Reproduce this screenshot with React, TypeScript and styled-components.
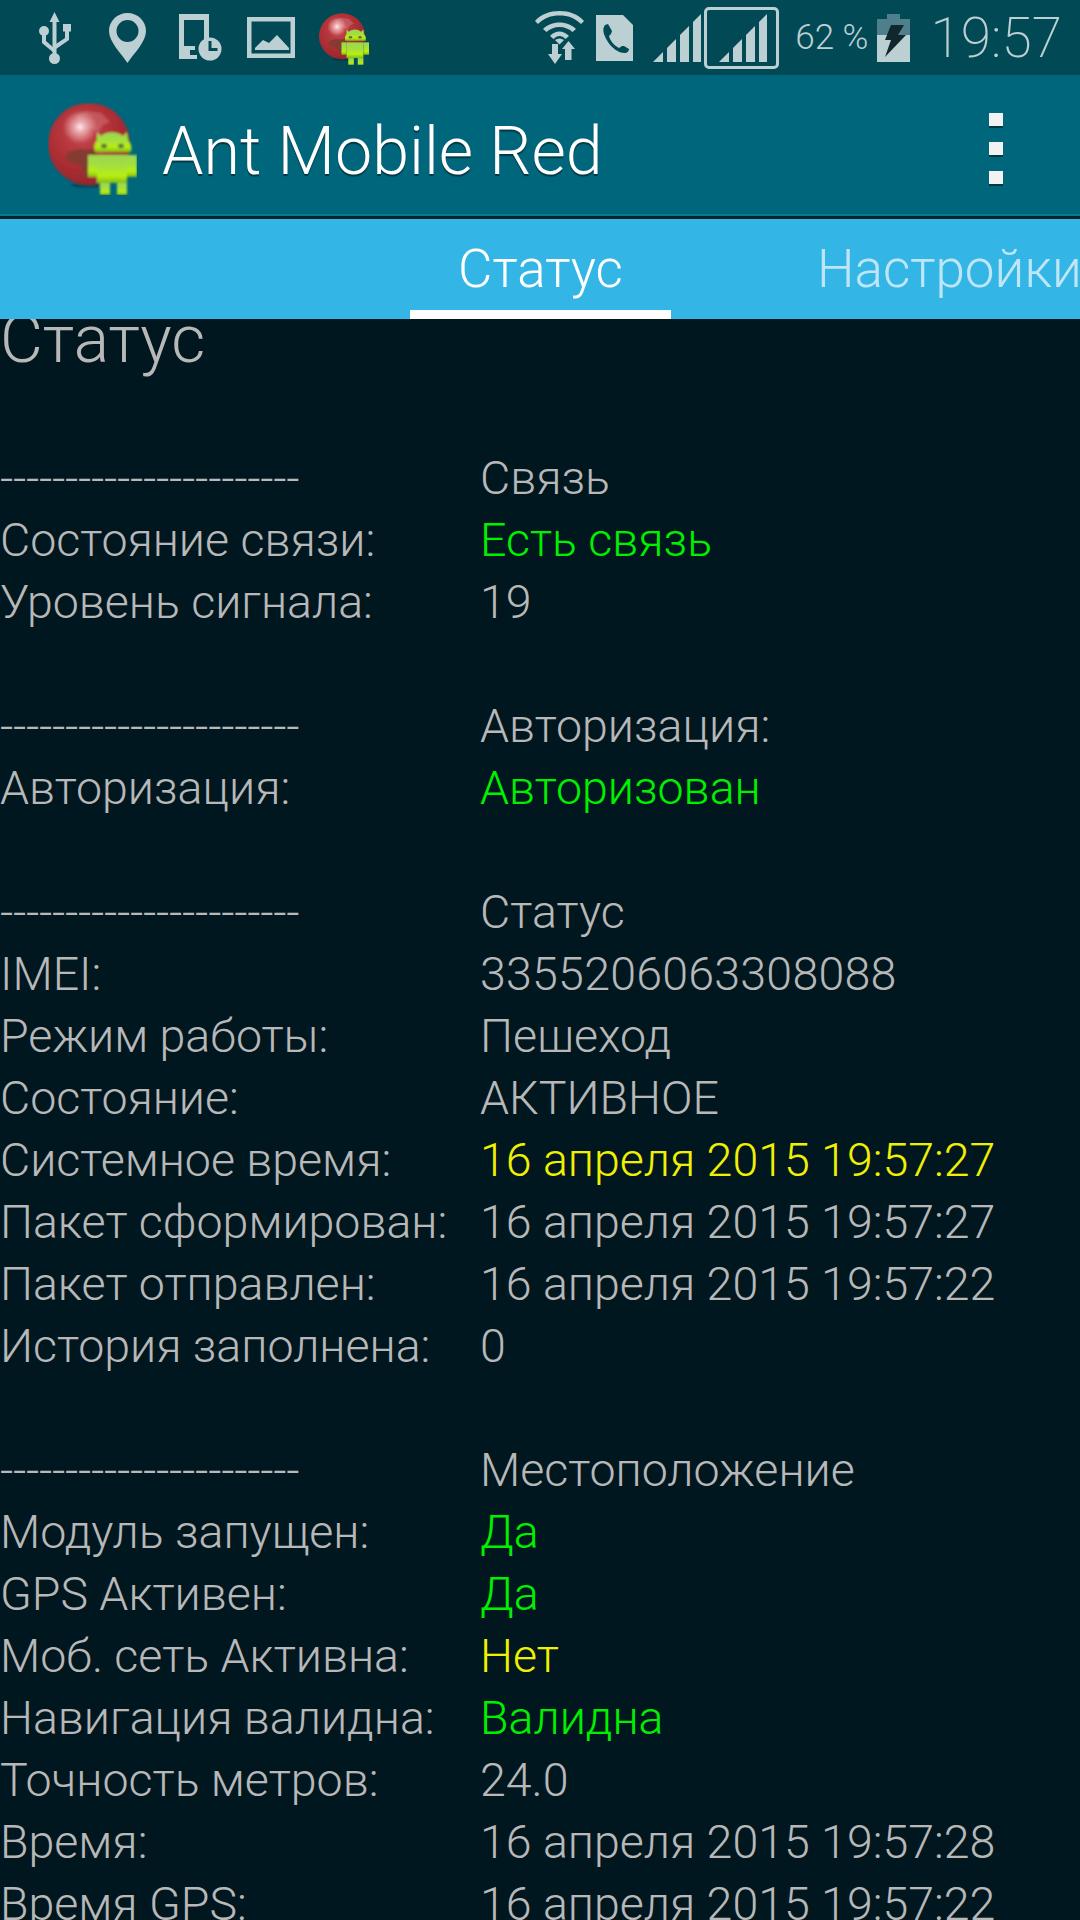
import React from 'react';
import styled, { createGlobalStyle } from 'styled-components';

type Tone = 'plain' | 'ok' | 'warn';

interface Row {
  label: string;
  value?: string;
  tone?: Tone;
  tracking?: number;
}

const DASHES = '-----------------------';

const ROWS: Row[] = [
  { label: DASHES, value: 'Связь' },
  { label: 'Состояние связи:', value: 'Есть связь', tone: 'ok' },
  { label: 'Уровень сигнала:', value: '19' },
  { label: '' },
  { label: DASHES, value: 'Авторизация:' },
  { label: 'Авторизация:', value: 'Авторизован', tone: 'ok' },
  { label: '' },
  { label: DASHES, value: 'Статус' },
  { label: 'IMEI:', value: '3355206063308088', tracking: 0.24 },
  { label: 'Режим работы:', value: 'Пешеход' },
  { label: 'Состояние:', value: 'АКТИВНОЕ' },
  { label: 'Системное время:', value: '16 апреля 2015 19:57:27', tone: 'warn' },
  { label: 'Пакет сформирован:', value: '16 апреля 2015 19:57:27' },
  { label: 'Пакет отправлен:', value: '16 апреля 2015 19:57:22' },
  { label: 'История заполнена:', value: '0' },
  { label: '' },
  { label: DASHES, value: 'Местоположение' },
  { label: 'Модуль запущен:', value: 'Да', tone: 'ok' },
  { label: 'GPS Активен:', value: 'Да', tone: 'ok' },
  { label: 'Моб. сеть Активна:', value: 'Нет', tone: 'warn' },
  { label: 'Навигация валидна:', value: 'Валидна', tone: 'ok' },
  { label: 'Точность метров:', value: '24.0' },
  { label: 'Время:', value: '16 апреля 2015 19:57:28' },
  { label: 'Время GPS:', value: '16 апреля 2015 19:57:22' },
];

const toneColor: Record<Tone, string> = {
  plain: '#b8b8b8',
  ok: '#00f000',
  warn: '#f0f000',
};

const AppIcon: React.FC<{ width: number; height: number; id: string }> = ({ width, height, id }) => (
  <svg width={width} height={height} viewBox="0 0 89 92">
    <defs>
      <radialGradient id={`${id}-globe`} cx="0.42" cy="0.36" r="0.72">
        <stop offset="0" stopColor="#c4484f" />
        <stop offset="0.5" stopColor="#b03036" />
        <stop offset="0.85" stopColor="#9c272c" />
        <stop offset="1" stopColor="#7c2628" />
      </radialGradient>
      <radialGradient id={`${id}-shine`}>
        <stop offset="0" stopColor="#fff2f2" />
        <stop offset="0.3" stopColor="#f7c4c6" stopOpacity="0.8" />
        <stop offset="1" stopColor="#f7c4c6" stopOpacity="0" />
      </radialGradient>
      <linearGradient id={`${id}-droid`} x1="0" y1="0" x2="0" y2="1">
        <stop offset="0" stopColor="#9cd653" />
        <stop offset="0.45" stopColor="#a5e03c" />
        <stop offset="0.75" stopColor="#b8f00c" />
        <stop offset="1" stopColor="#80b91c" />
      </linearGradient>
      <filter id={`${id}-soft`}>
        <feGaussianBlur stdDeviation="1" />
      </filter>
    </defs>
    <g filter={`url(#${id}-soft)`}>
      <ellipse cx="41" cy="82" rx="18" ry="2.500" fill="#00343f" opacity="0.7" />
      <circle cx="41" cy="41" r="41" fill={`url(#${id}-globe)`} />
      <path
        d="M17 55c1-5 6-8 11-8 4-2 7-1 9 0 4-1 8-2 11 0l2 8-2 6-4 5-2 6-4 3-3-3-1-7-4-4-7-1z"
        fill="#853a30"
      />
      <path d="M27 13l11-5 15 2 9 9-7 3-5 7-7-4-6 3-5-8z" fill="#d9868a" opacity="0.4" />
      <circle cx="32" cy="24" r="17" fill={`url(#${id}-shine)`} />
      <g fill={`url(#${id}-droid)`}>
        <path d="M49 29l4 4a18 18 0 0 1 22 0l4-4 1 8a16 14 0 0 1 3 12H47a16 14 0 0 1 2-12z" />
        <rect x="49" y="52" width="30" height="28" />
        <rect x="40" y="52" width="9" height="22" />
        <rect x="79" y="52" width="10" height="22" />
        <rect x="52" y="80" width="10" height="12" />
        <rect x="69" y="80" width="10" height="12" />
      </g>
      <ellipse cx="56" cy="43" rx="3" ry="2.200" fill="#5d6f3a" />
      <ellipse cx="73" cy="43" rx="3" ry="2.200" fill="#5d6f3a" />
    </g>
  </svg>
);

const UsbIcon = () => (
  <svg width="32" height="52" viewBox="0 0 32 52" fill="#bccfd3">
    <path d="M15.500 0l5 10h-3v32h-4V10h-3z" />
    <circle cx="15.500" cy="46.500" r="5.500" />
    <circle cx="5" cy="19" r="5" />
    <rect x="24" y="12" width="8" height="7.500" />
    <path d="M3 22h4v7l8 7v5L3 31z" />
    <path d="M26 18h4v10l-13 9v-5l9-6z" />
  </svg>
);

const PinIcon = () => (
  <svg width="37" height="50" viewBox="0 0 37 50" fill="#bccfd3">
    <path
      fillRule="evenodd"
      d="M18.500 0C28.700 0 37 8 37 18c0 11-12 22-18.500 32C12 40 0 29 0 18 0 8 8.300 0 18.500 0zm0 7a11 11 0 1 0 0 22 11 11 0 0 0 0-22z"
    />
  </svg>
);

const ScreenshotIcon = () => (
  <svg width="43" height="47" viewBox="0 0 43 47" fill="#bccfd3">
    <path d="M0 0h30v26h-5V6H5v26h11v4h-5v5h7v4H0z" />
    <circle cx="31" cy="35" r="11.500" />
    <path d="M29.500 27h3v7h6v3h-9z" fill="#024956" />
  </svg>
);

const PictureIcon = () => (
  <svg width="48" height="41" viewBox="0 0 48 41" fill="#bccfd3">
    <path fillRule="evenodd" d="M0 0h48v41H0zM4.500 4.500v32h39v-32z" />
    <path d="M8 33v-2l8-8 6 3 8-8 12 13v2z" />
  </svg>
);

const WifiIcon = () => (
  <svg width="49" height="53" viewBox="0 0 49 53" fill="#bccfd3">
    <path d="M0 10C6 3 15 0 24.500 0S43 3 49 10l-3 3C40 7 33 4.500 24.500 4.500S9 7 3 13z" />
    <path d="M8 18c4-4 10-6.500 16.500-6.500S37 14 41 18l-3.500 3c-3-3-8-5-13-5s-10 2-13 5z" />
    <path d="M15 25c2.500-3 6-4.500 9.500-4.500S31 22 34 25l-3.500 3c-2-2-4-3-6-3s-4 1-6 3z" />
    <path d="M20 29c3-2 6-2 9 0l-4.500 4.500z" />
    <path d="M17 33h6v10h4l-7 10-7-10h4z" />
    <path d="M30 49V38h-3l6.500-8 6.500 8h-3.500v11z" />
  </svg>
);

const SimIcon = () => (
  <svg width="37" height="46" viewBox="0 0 37 46">
    <path d="M0 0h27l10 10v36H0z" fill="#bccfd3" />
    <path
      d="M9 10l3-1 4 7-1 3-2 2c1 5 6 10 10 12l3-2h2l5 3c0 2-2 4-4 4-7 0-13-5-17-11C9 22 5 15 9 10z"
      fill="#024956"
    />
  </svg>
);

const SignalIcon = () => (
  <svg width="48" height="48" viewBox="0 0 48 48" fill="#bccfd3">
    <path d="M0 48l10-10v10z" />
    <path d="M14 48V34l9-9v23z" />
    <path d="M27 48V21l9-9v36z" />
    <path d="M40 48V8l8-8v48z" />
  </svg>
);

const BatteryIcon = () => (
  <svg width="33" height="48" viewBox="0 0 33 48">
    <rect x="10" y="0" width="13" height="5" fill="#4e7f8b" />
    <rect x="0" y="5" width="33" height="16" fill="#4e7f8b" />
    <rect x="0" y="21" width="33" height="27" fill="#bccfd3" />
    <path d="M14 11h13l-6 10h8L8 43l6-17H8z" fill="#12262d" />
  </svg>
);

const App: React.FC = () => (
  <Page>
    <GlobalStyle />
    <StatusBar>
      <StatusGroup>
        <StatusSlot>
          <UsbIcon />
        </StatusSlot>
        <StatusSlot $ml={38}>
          <PinIcon />
        </StatusSlot>
        <StatusSlot $ml={33}>
          <ScreenshotIcon />
        </StatusSlot>
        <StatusSlot $ml={25}>
          <PictureIcon />
        </StatusSlot>
        <StatusSlot $ml={24} $mt={3}>
          <AppIcon width={50} height={52} id="status" />
        </StatusSlot>
      </StatusGroup>
      <StatusGroup>
        <StatusSlot>
          <WifiIcon />
        </StatusSlot>
        <StatusSlot $ml={12}>
          <SimIcon />
        </StatusSlot>
        <StatusSlot $ml={20}>
          <SignalIcon />
        </StatusSlot>
        <SimFrame>
          <SignalIcon />
        </SimFrame>
        <BatteryText>62 %</BatteryText>
        <StatusSlot $ml={9}>
          <BatteryIcon />
        </StatusSlot>
        <Clock>19:57</Clock>
      </StatusGroup>
    </StatusBar>
    <ActionBar>
      <LogoSlot>
        <AppIcon width={89} height={92} id="action" />
      </LogoSlot>
      <AppTitle>Ant Mobile Red</AppTitle>
      <Overflow>
        <Dot />
        <Dot />
        <Dot />
      </Overflow>
    </ActionBar>
    <TabStrip>
      <Tab $active>Статус</Tab>
      <Tab>Настройки</Tab>
    </TabStrip>
    <Content>
      <Heading>Статус</Heading>
      <Table>
        {ROWS.map((row, i) => (
          <TableRow key={i}>
            <Cell $tracking={row.label === DASHES ? -0.32 : 0}>{row.label}</Cell>
            <Cell $tone={row.tone ?? 'plain'} $tracking={row.tracking}>
              {row.value}
            </Cell>
          </TableRow>
        ))}
      </Table>
    </Content>
  </Page>
);

export default App;

// --- Styled Components ---
const GlobalStyle = createGlobalStyle`
  html, body {
    margin: 0;
    padding: 0;
    background: #01171f;
  }
`;

const Page = styled.div`
  width: 1080px;
  height: 1920px;
  overflow: hidden;
  display: flex;
  flex-direction: column;
  font-family: Roboto, 'Liberation Sans', sans-serif;
  font-weight: 300;
`;

const StatusBar = styled.div`
  height: 75px;
  flex: none;
  display: flex;
  align-items: center;
  justify-content: space-between;
  padding: 0 18px 0 39px;
  background: #024956;
  color: #bccfd3;
`;

const StatusGroup = styled.div`
  display: flex;
  align-items: center;
`;

const StatusSlot = styled.div<{ $ml?: number; $mt?: number }>`
  display: flex;
  margin-left: ${(p) => p.$ml ?? 0}px;
  margin-top: ${(p) => p.$mt ?? 0}px;
`;

const SimFrame = styled.div`
  display: flex;
  align-items: center;
  width: 75px;
  height: 62px;
  margin-left: 3px;
  padding: 1px 0 0 12px;
  box-sizing: border-box;
  border: 3px solid #bccfd3;
  border-radius: 5px;
`;

const BatteryText = styled.span`
  font-size: 35px;
  margin-left: 16px;
`;

const Clock = styled.span`
  font-size: 55px;
  font-weight: 200;
  margin-left: 20px;
`;

const ActionBar = styled.div`
  height: 141px;
  flex: none;
  display: flex;
  align-items: center;
  box-sizing: border-box;
  padding: 0 0 0 48px;
  background: #00667c;
  border-bottom: 2px solid #0b7a8e;
`;

const LogoSlot = styled.div`
  display: flex;
  margin-top: 9px;
`;

const AppTitle = styled.h1`
  flex: 1;
  margin: 12px 0 0 25px;
  font-size: 66.4px;
  font-weight: 300;
  color: #fff;
  text-shadow: 0 2px 1px #003845;
`;

const Overflow = styled.div`
  display: flex;
  flex-direction: column;
  gap: 16px;
  margin: 8px 77px 0 0;
`;

const Dot = styled.span`
  display: block;
  width: 14px;
  height: 13px;
  background: #f2f2f2;
  box-shadow: 0 2px 0 #003845;
`;

const TabStrip = styled.div`
  height: 103px;
  flex: none;
  display: flex;
  box-sizing: border-box;
  padding-left: 410px;
  background: #33b5e5;
  border-top: 3px solid #06222b;
  overflow: hidden;
`;

const Tab = styled.div<{ $active?: boolean }>`
  flex: none;
  width: ${(p) => (p.$active ? '261px' : 'auto')};
  margin-left: ${(p) => (p.$active ? '0' : '146px')};
  padding-top: 8px;
  display: flex;
  align-items: center;
  justify-content: center;
  box-sizing: border-box;
  font-size: 53px;
  font-weight: 300;
  color: ${(p) => (p.$active ? '#fff' : '#bfe6f7')};
  border-bottom: 9px solid ${(p) => (p.$active ? '#fff' : 'transparent')};
`;

const Content = styled.div`
  flex: 1;
  min-height: 0;
  overflow: hidden;
  background: #01171f;
`;

const Heading = styled.h2`
  margin: -8px 0 0 0;
  height: 136px;
  font-size: 66px;
  line-height: 58px;
  font-weight: 300;
  color: #b8b8b8;
`;

const Table = styled.div`
  display: flex;
  flex-direction: column;
`;

const TableRow = styled.div`
  display: grid;
  grid-template-columns: 480px 1fr;
  height: 62px;
`;

const Cell = styled.div<{ $tone?: Tone; $tracking?: number }>`
  font-size: 46.5px;
  line-height: 62px;
  letter-spacing: ${(p) => p.$tracking ?? 0}px;
  white-space: nowrap;
  color: ${(p) => toneColor[p.$tone ?? 'plain']};
`;
